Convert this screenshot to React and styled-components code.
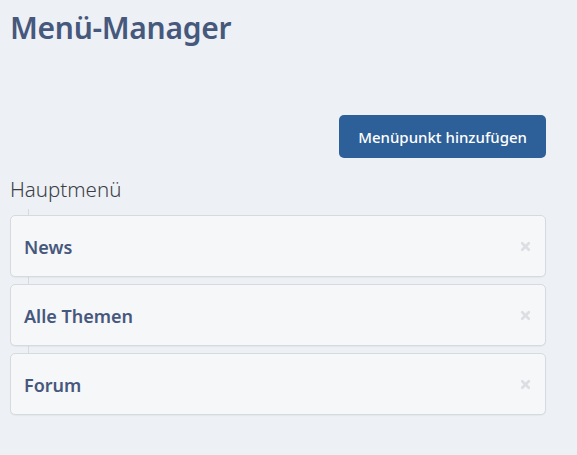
import React from 'react';
import styled, { createGlobalStyle } from 'styled-components';

const GlobalStyle = createGlobalStyle`
  html, body {
    margin: 0;
    padding: 0;
    background: #edf0f5;
    font-family: "Noto Sans", "Open Sans", sans-serif;
  }
`;

const App = () => {
  const items = ['News', 'Alle Themen', 'Forum'];

  return (
    <Page>
      <GlobalStyle />
      <Title>Menü-Manager</Title>
      <Toolbar>
        <AddButton>Menüpunkt hinzufügen</AddButton>
      </Toolbar>
      <MenuTitle>Hauptmenü</MenuTitle>
      <MenuList>
        {items.map((item) => (
          <MenuItem key={item}>
            <ItemLabel>{item}</ItemLabel>
            <RemoveIcon viewBox="0 0 10 10" aria-hidden="true">
              <path d="M2 2 L8 8 M8 2 L2 8" />
            </RemoveIcon>
          </MenuItem>
        ))}
      </MenuList>
    </Page>
  );
};

export default App;

const Page = styled.div`
  width: 577px;
  height: 455px;
  box-sizing: border-box;
  padding: 8px 31px 0 10px;
`;

const Title = styled.h1`
  margin: 0;
  font-size: 30px;
  font-weight: 600;
  color: #46587c;
  letter-spacing: -0.3px;
  line-height: 40px;
`;

const Toolbar = styled.div`
  display: flex;
  justify-content: flex-end;
  margin-top: 67px;
`;

const AddButton = styled.button`
  height: 43px;
  padding: 0 19px;
  border: none;
  border-radius: 5px;
  background: #2d5f99;
  color: #fff;
  font-family: inherit;
  font-size: 15px;
  font-weight: 500;
  cursor: pointer;
`;

const MenuTitle = styled.h2`
  margin: 16px 0 0;
  font-size: 20.5px;
  font-weight: 300;
  color: #3b3f45;
  line-height: 30px;
`;

const MenuList = styled.div`
  position: relative;
  display: flex;
  flex-direction: column;
  gap: 7px;
  margin-top: 11px;

  &::before {
    content: '';
    position: absolute;
    left: 18px;
    top: -6px;
    height: 145px;
    border-left: 1px solid #d7dbe1;
  }
`;

const MenuItem = styled.div`
  position: relative;
  display: flex;
  align-items: center;
  justify-content: space-between;
  height: 62px;
  box-sizing: border-box;
  padding: 1px 14px 0 13px;
  background: #f6f7f9;
  border: 1px solid #d6d9de;
  border-radius: 5px;
  box-shadow: 0 1px 1px rgba(0, 0, 0, 0.04);
`;

const ItemLabel = styled.span`
  font-size: 18px;
  font-weight: 600;
  color: #46587c;
`;

const RemoveIcon = styled.svg`
  width: 11px;
  height: 11px;
  stroke: #dcdee3;
  stroke-width: 2.4;
  stroke-linecap: round;
  fill: none;
`;
